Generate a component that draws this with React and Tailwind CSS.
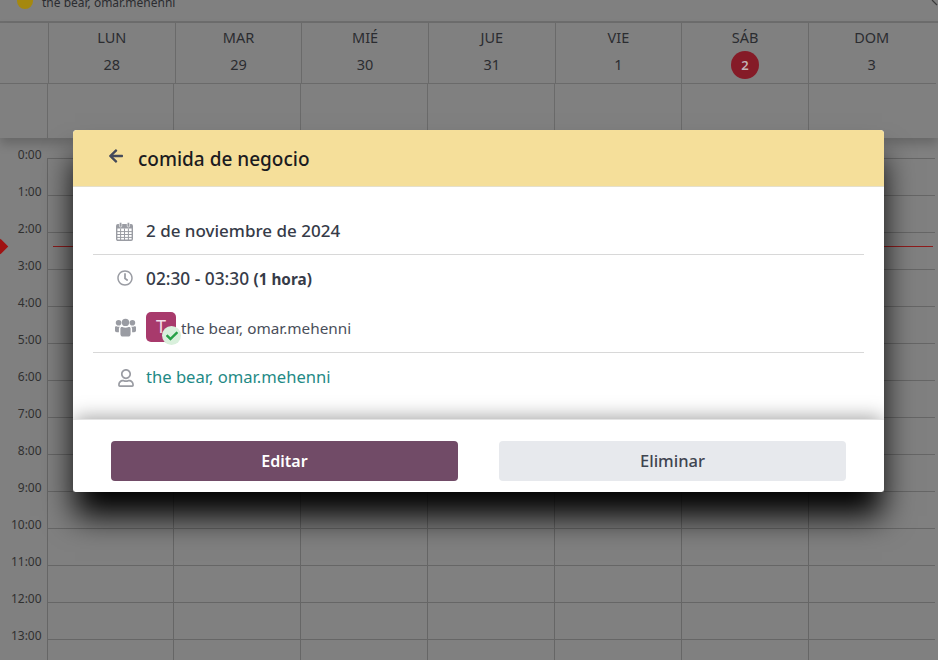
import { FaArrowLeft, FaCheck, FaRegClock, FaRegUser } from "react-icons/fa";

const days = [
  ["LUN", "28"],
  ["MAR", "29"],
  ["MIÉ", "30"],
  ["JUE", "31"],
  ["VIE", "1"],
  ["SÁB", "2"],
  ["DOM", "3"],
];
const hours = Array.from({ length: 14 }, (_, i) => `${i}:00`);
const cells = [0, 1, 2, 3, 4, 5, 6];

function CalendarIcon() {
  return (
    <svg width="17" height="19" viewBox="0 0 17 19" fill="none" className="shrink-0 text-[#9a9ca3]">
      <rect x="0.7" y="2.7" width="15.6" height="15.6" rx="1.2" stroke="currentColor" strokeWidth="1.4" />
      <rect x="1" y="3" width="15" height="3.5" fill="currentColor" />
      <rect x="3.4" y="0.6" width="2.4" height="4.4" rx="1" fill="currentColor" stroke="#fff" strokeWidth="0.6" />
      <rect x="11.2" y="0.6" width="2.4" height="4.4" rx="1" fill="currentColor" stroke="#fff" strokeWidth="0.6" />
      <path d="M1 9.6H16M1 12.5H16M1 15.4H16M4.6 6.5V18M8.5 6.5V18M12.4 6.5V18" stroke="currentColor" strokeWidth="1" />
    </svg>
  );
}

function UsersIcon() {
  return (
    <svg width="21" height="19" viewBox="0 0 21 19" className="shrink-0 fill-[#9a9ca3]">
      <circle cx="10.5" cy="4.4" r="3.7" />
      <circle cx="3.6" cy="4.8" r="2.8" />
      <circle cx="17.4" cy="4.8" r="2.8" />
      <path d="M5.4 10.6C5.4 9.2 6.4 8.6 7.4 9c1.9 1 4.3 1 6.2 0 1-.4 2 .2 2 1.6V16c0 1.6-1 2.6-2.6 2.6H8C6.4 18.6 5.4 17.6 5.4 16Z" />
      <path d="M0 9.6C0 8.5.8 8 1.6 8.3c1.2.6 2.2.7 3.2.4-.6.6-.9 1.2-.9 2v3.5H1.8C.8 14.2 0 13.5 0 12.5Z" />
      <path d="M21 9.6c0-1.1-.8-1.6-1.6-1.3-1.2.6-2.2.7-3.2.4.6.6.9 1.2.9 2v3.5h2.1c1 0 1.8-.7 1.8-1.7Z" />
    </svg>
  );
}

export default function App() {
  return (
    <div className="relative h-[660px] w-[938px] overflow-hidden bg-[#808080] font-['Noto_Sans','Open_Sans',sans-serif] text-[#2b2c30]">
      <div className="flex h-[23px] items-center gap-[9px] overflow-hidden border-b-2 border-[#6e6e6e] pl-[17px]">
        <span className="-mt-[19px] h-4 w-4 shrink-0 rounded-full bg-[#a5880f]"></span>
        <span className="-mt-[16px] text-[12px] leading-4">the bear, omar.mehenni</span>
      </div>

      <svg width="7" height="6" viewBox="0 0 7 6" className="absolute left-[931px] top-0 stroke-[#3c3c3c]">
        <path d="M1 0L6 5" strokeWidth="1.2" fill="none" />
      </svg>

      <div className="relative z-10 shadow-[0_6px_10px_rgba(0,0,0,0.2)]">
        <div className="grid h-[61px] w-[936px] grid-cols-[48px_repeat(7,126.65px)] border-b border-[#6a6a6a]">
          <div></div>
          {days.map(([name, num]) => (
            <div key={name} className="flex flex-col items-center border-l border-[#6a6a6a] pt-[4px] text-[14.5px] leading-5">
              <span>{name}</span>
              {num === "2" ? (
                <span className="mt-[4px] flex h-7 w-7 items-center justify-center rounded-full bg-[#851b27] text-[13px] font-semibold text-[#c2b3b5]">
                  {num}
                </span>
              ) : (
                <span className="mt-[7px] text-[14.5px]">{num}</span>
              )}
            </div>
          ))}
        </div>
        <div className="grid h-[54px] w-[936px] grid-cols-[46.6px_repeat(7,126.85px)] bg-[#808080]">
          <div></div>
          {cells.map((c) => (
            <div key={c} className="border-l border-[#6a6a6a]"></div>
          ))}
        </div>
      </div>

      <div className="pt-[20px]">
        {hours.map((h) => (
          <div key={h} className="grid h-[37px] w-[936px] grid-cols-[46.6px_repeat(7,126.85px)]">
            <div className="-mt-[12px] pr-[5px] text-right text-[12px] leading-[18px] text-[#303030]">{h}</div>
            {cells.map((c) => (
              <div key={c} className="border-l border-t border-[#666666]"></div>
            ))}
          </div>
        ))}
      </div>

      <div className="absolute left-[53px] top-[246px] h-px w-[880px] bg-[#8f1c1c]"></div>
      <div className="absolute -left-[5px] top-[241px] h-[11px] w-[11px] rotate-45 bg-[#a01212]"></div>

      <div className="absolute left-[73px] top-[130px] z-20 flex h-[362px] w-[811px] flex-col overflow-hidden rounded-[4px] bg-white">
        <div className="flex h-[57px] shrink-0 items-center gap-[14px] border-b border-[#e5e0cc] bg-[#f5df9a] pl-[35px]">
          <FaArrowLeft className="-mt-[5px] text-[16px] text-[#454b5a]" />
          <span className="mt-[3px] text-[19px] font-medium text-[#1b1b1f]">comida de negocio</span>
        </div>

        <div className="flex-1 px-[20px] text-[#363b48]">
          <div className="flex h-[68px] items-center gap-[13px] border-b border-[#d8d8d8] pl-[23px] pt-[23px] pb-[1px]">
            <CalendarIcon />
            <span className="-mt-[2px] text-[17px] font-medium">2 de noviembre de 2024</span>
          </div>
          <div className="flex h-[49px] items-center gap-[13px] pl-[24px]">
            <FaRegClock className="-mt-[3px] text-[16px] text-[#9a9ca3]" />
            <span className="-mt-[1px] text-[17.3px] font-medium">
              02:30 - 03:30 <span className="text-[15.3px] font-bold">(1 hora)</span>
            </span>
          </div>
          <div className="flex h-[49px] items-center gap-[10px] border-b border-[#d8d8d8] pl-[22px] pb-[2px]">
            <UsersIcon />
            <div className="relative h-[30px] w-[30px] shrink-0 rounded-[5px] bg-[#a83a6c] text-center text-[18px] leading-[28px] text-[#f3dfe8]">
              T
              <span className="absolute -bottom-[3px] -right-[5px] flex h-[19px] w-[19px] items-center justify-center rounded-full bg-[#d9f0dc]">
                <FaCheck className="text-[12px] text-[#27a147]" />
              </span>
            </div>
            <span className="-ml-[5px] mt-[3px] text-[15.3px] text-[#4a4e5a]">the bear, omar.mehenni</span>
          </div>
          <div className="flex h-[49px] items-center gap-[11px] pl-[24px]">
            <FaRegUser className="text-[18px] text-[#9a9ca3]" />
            <span className="text-[16.6px] text-[#1f8a86]">the bear, omar.mehenni</span>
          </div>
        </div>

        <div className="z-10 flex h-[73px] shrink-0 gap-[41px] border-t border-[#e4e4e4] bg-white px-[38px] pt-[21px] shadow-[0_-4px_18px_-2px_rgba(0,0,0,0.36)]">
          <button className="h-[40px] flex-1 rounded-[4px] bg-[#714b67] text-[16px] font-semibold text-white">Editar</button>
          <button className="h-[40px] flex-1 rounded-[4px] bg-[#e7e9ed] text-[16.5px] font-medium text-[#3f4450]">Eliminar</button>
        </div>
      </div>

      <div className="absolute left-[73px] top-[130px] z-10 h-[362px] w-[811px] shadow-[0_26px_30px_-2px_rgba(0,0,0,1)]"></div>
    </div>
  );
}
